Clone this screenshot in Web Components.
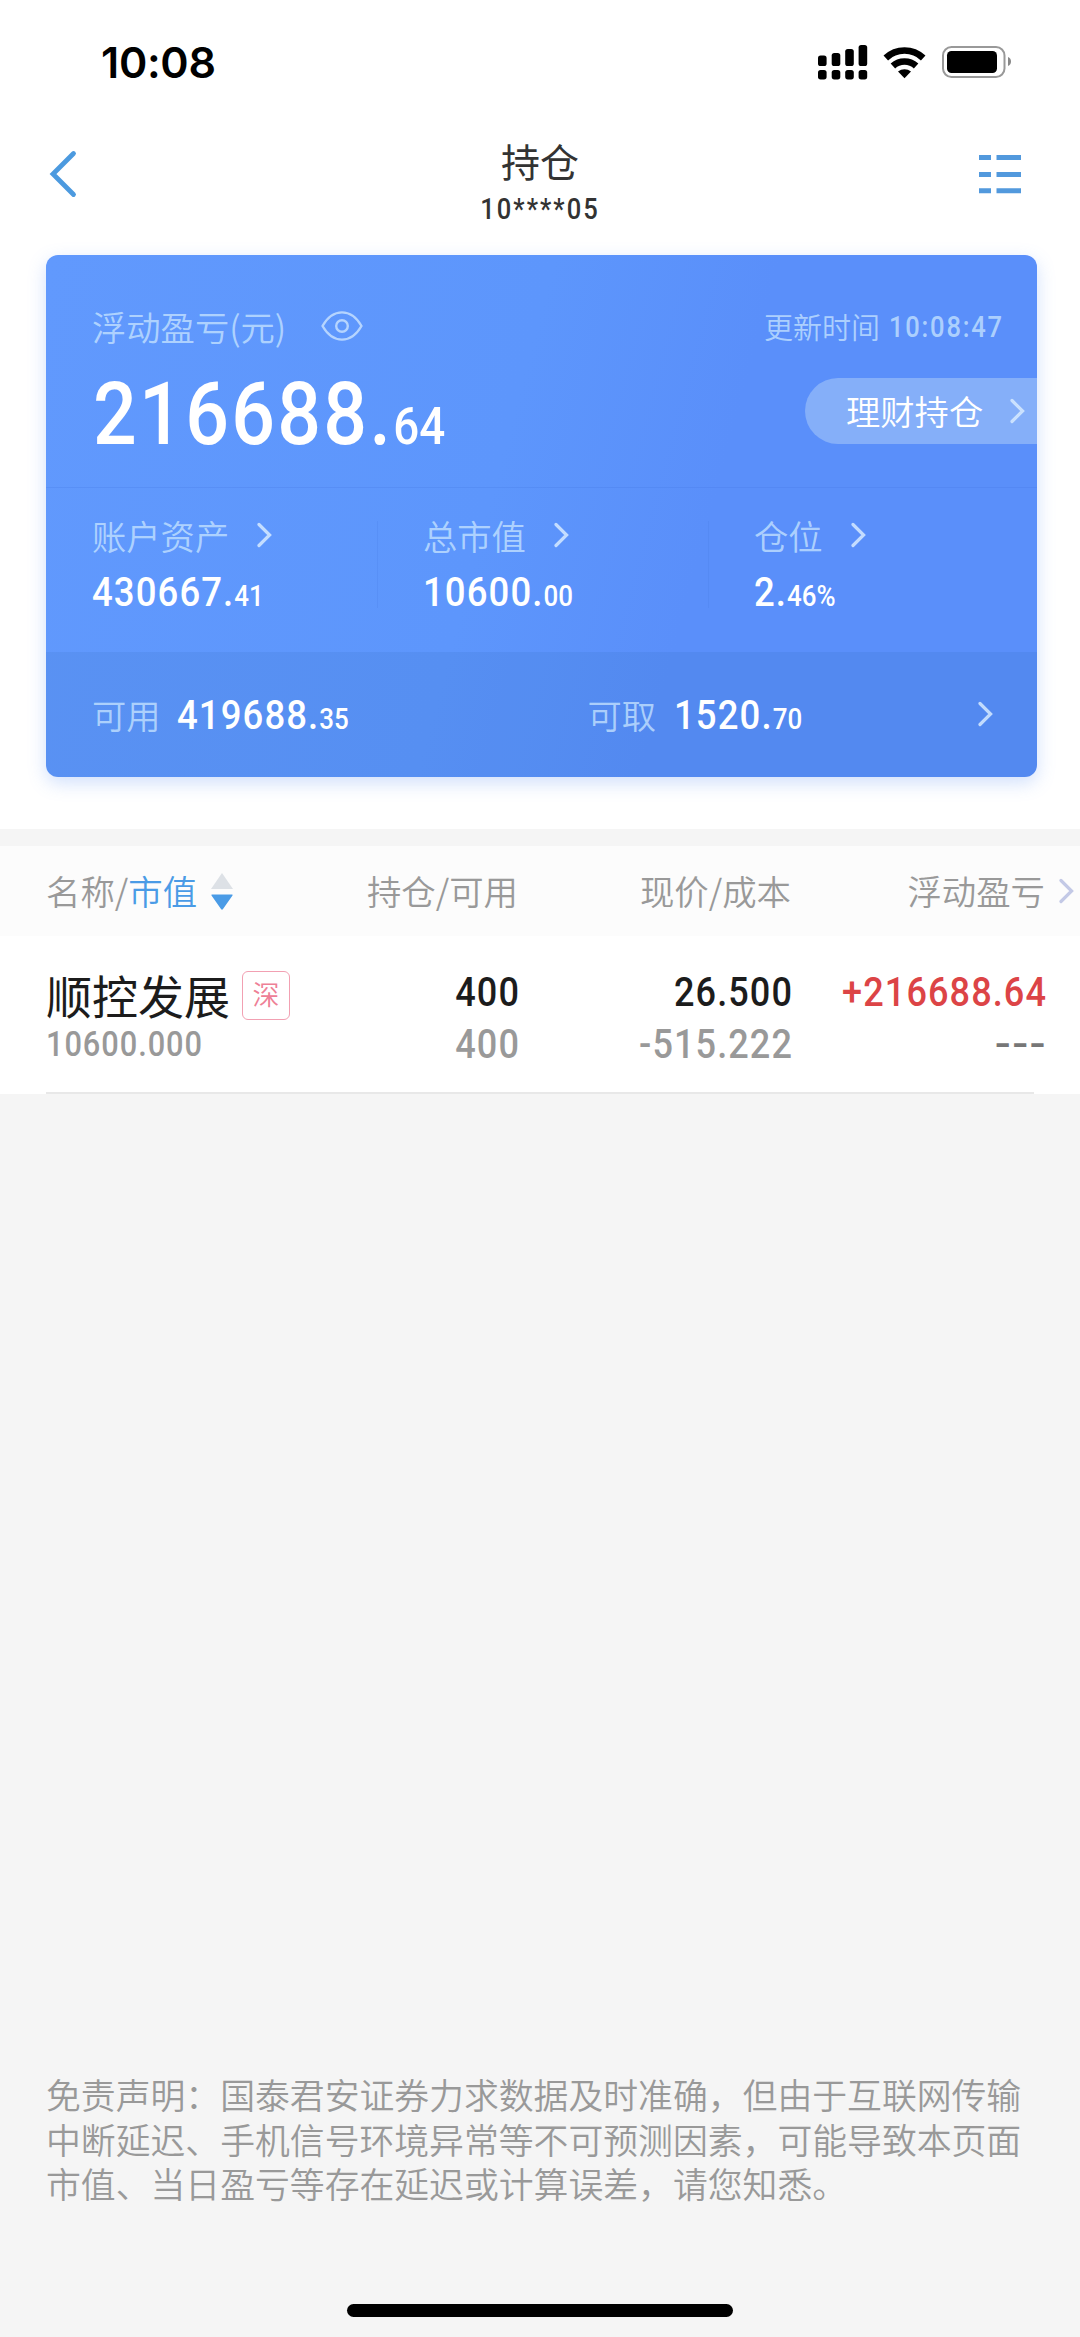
<!DOCTYPE html>
<html lang="zh-CN">
<head>
<meta charset="utf-8">
<title>持仓</title>
<style>
  body {
    margin: 0;
    background: #f5f5f5;
    font-family: "Noto Sans CJK SC", sans-serif;
    font-weight: 350;
  }
</style>
</head>
<body>
<holdings-app></holdings-app>

<script>
// Numero com parte decimal menor: <din-num decimals="64">216688.</din-num>
class DinNum extends HTMLElement {
  constructor() {
    super();
    this.attachShadow({ mode: 'open' });
  }

  connectedCallback() {
    const decimals = this.getAttribute('decimals') || '';
    this.shadowRoot.innerHTML = `
      <style>
        :host {
          display: block;
          font-family: Roboto, sans-serif;
          font-weight: 500;
          letter-spacing: 0.03em;
          white-space: nowrap;
          transform: scaleX(0.88);
          transform-origin: left center;
        }
        :host([end]) {
          transform-origin: right center;
          text-align: right;
          margin-right: -0.05em;
        }
        :host([center]) {
          transform-origin: center;
          text-align: center;
        }
        small {
          font-size: var(--small, 0.71em);
          letter-spacing: 0;
        }
      </style>
      <slot></slot>${decimals ? `<small>${decimals}</small>` : ''}
    `;
  }
}
customElements.define('din-num', DinNum);

class ChevronIcon extends HTMLElement {
  constructor() {
    super();
    this.attachShadow({ mode: 'open' });
    this.shadowRoot.innerHTML = `
      <style>
        :host {
          display: block;
          width: 15px;
          height: 26px;
          color: rgba(214, 234, 255, 0.85);
        }
        svg {
          display: block;
        }
      </style>
      <svg width="15" height="26" viewBox="0 0 15 26" fill="none" stroke="currentColor" stroke-width="3.2" stroke-linecap="round" stroke-linejoin="miter">
        <path d="M2 2.5L12.6 13L2 23.5"/>
      </svg>
    `;
  }
}
customElements.define('chevron-icon', ChevronIcon);

class StatusBar extends HTMLElement {
  constructor() {
    super();
    this.attachShadow({ mode: 'open' });
    this.shadowRoot.innerHTML = `
      <style>
        :host {
          display: flex;
          justify-content: space-between;
          align-items: center;
          height: 123px;
          padding: 0 69px 0 101px;
          box-sizing: border-box;
          color: #000;
        }
        .time {
          font-family: Inter, sans-serif;
          font-weight: 600;
          font-size: 43px;
          letter-spacing: -0.3px;
          line-height: 50px;
        }
        svg {
          display: block;
        }
      </style>
      <div class="time">10:08</div>
      <svg width="194" height="36" viewBox="817 43 194 36">
        <rect x="818" y="54.5" width="8.6" height="10.5" rx="2.6"/>
        <rect x="831.7" y="52" width="8.6" height="13" rx="2.6"/>
        <rect x="845.2" y="48" width="8.6" height="17" rx="2.6"/>
        <rect x="858.6" y="44" width="8.6" height="21" rx="2.6"/>
        <rect x="818" y="69" width="8.6" height="9.4" rx="2.6"/>
        <rect x="831.7" y="69" width="8.6" height="9.4" rx="2.6"/>
        <rect x="845.2" y="69" width="8.6" height="9.4" rx="2.6"/>
        <rect x="858.6" y="69" width="8.6" height="9.4" rx="2.6"/>
        <g fill="none" stroke="#000" stroke-width="6.6">
          <path d="M885.8 57A27.2 27.2 0 0 1 923.2 57"/>
          <path d="M892.9 65A17 17 0 0 1 916.1 65"/>
        </g>
        <path d="M898 70.6A10.5 10.5 0 0 1 911 70.6L904.5 77.2Z"/>
        <rect x="943" y="46" width="61.5" height="30" rx="8.5" fill="none" stroke="#999" stroke-width="2"/>
        <rect x="947" y="50" width="50" height="22" rx="4.5"/>
        <path d="M1008 56C1012 57.5 1012 63.5 1008 65Z" fill="#888"/>
      </svg>
    `;
  }
}
customElements.define('status-bar', StatusBar);

class NavHeader extends HTMLElement {
  constructor() {
    super();
    this.attachShadow({ mode: 'open' });
    this.shadowRoot.innerHTML = `
      <style>
        :host {
          display: grid;
          grid-template-columns: 150px 1fr 150px;
          height: 132px;
          color: #333;
        }
        .back {
          padding: 27px 0 0 49px;
        }
        .list {
          padding: 31px 0 0 49px;
        }
        svg {
          display: block;
        }
        .title {
          text-align: center;
          font-size: 39px;
          line-height: 46px;
          font-weight: 400;
          padding-top: 14px;
        }
        din-num {
          font-size: 29px;
          line-height: 30px;
          letter-spacing: 0.08em;
          margin-top: 11px;
        }
      </style>
      <div class="back">
        <svg width="30" height="48" viewBox="0 0 30 48" fill="none" stroke="#4c9adf" stroke-width="4.8" stroke-linecap="round">
          <path d="M24.5 3.5L4 24L24.5 44.5"/>
        </svg>
      </div>
      <div>
        <div class="title"><slot></slot></div>
        <din-num center>10****05</din-num>
      </div>
      <div class="list">
        <svg width="43" height="40" viewBox="0 0 43 40" fill="#5299dd">
          <path d="M0 1h12v5H0zM17.5 1H42v5H17.5zM0 18h12v5H0zM17.5 18H42v5H17.5zM0 34.2h12v5H0zM17.5 34.2H42v5H17.5z"/>
        </svg>
      </div>
    `;
  }
}
customElements.define('nav-header', NavHeader);

// Cartao azul com o resumo da conta
class AssetCard extends HTMLElement {
  constructor() {
    super();
    this.attachShadow({ mode: 'open' });
    this.colunas = [
      { nome: '账户资产', valor: '430667.', decimal: '41' },
      { nome: '总市值', valor: '10600.', decimal: '00' },
      { nome: '仓位', valor: '2.', decimal: '46%' }
    ];
    this.saldos = [
      { nome: '可用', valor: '419688.', decimal: '35' },
      { nome: '可取', valor: '1520.', decimal: '70' }
    ];
  }

  connectedCallback() {
    this.render();
  }

  render() {
    this.shadowRoot.innerHTML = `
      <style>
        :host {
          display: block;
          width: 991px;
          height: 522px;
          margin-left: 46px;
          border-radius: 12px;
          overflow: hidden;
          color: #fff;
          background: linear-gradient(105deg, #6199fd 0%, #5d96fc 45%, #5a8ffa 65%, #5a8ffa 100%);
          box-shadow: 0 6px 18px rgba(90, 145, 245, 0.28);
        }
        .label {
          font-size: 34.3px;
          line-height: 40px;
          color: rgba(196, 226, 255, 0.8);
          white-space: nowrap;
        }
        .top {
          height: 232px;
          box-sizing: border-box;
          padding-top: 48px;
        }
        .info {
          display: flex;
          align-items: center;
          height: 44px;
          padding: 2px 39px 0 46px;
          box-sizing: border-box;
        }
        .eye {
          margin-left: 35px;
        }
        svg {
          display: block;
        }
        .update {
          display: flex;
          align-items: center;
          margin-left: auto;
          font-size: 29px;
          color: rgba(196, 226, 255, 0.8);
        }
        .update din-num {
          width: 109px;
          margin: 2px 0 0 9px;
          letter-spacing: 0.07em;
        }
        .total {
          display: flex;
          justify-content: space-between;
          align-items: flex-start;
        }
        .total din-num {
          font-size: 87.5px;
          line-height: 100px;
          margin: 17px 0 0 47px;
          --small: 52px;
        }
        .pill {
          display: flex;
          align-items: center;
          width: 232px;
          height: 66px;
          margin-top: 31px;
          padding: 0 12px 0 41px;
          box-sizing: border-box;
          border-radius: 33px 0 0 33px;
          background: #85aff9;
          font-size: 34.3px;
          line-height: 40px;
        }
        .pill span {
          margin-top: -2px;
        }
        .pill chevron-icon {
          margin-left: auto;
        }
        .cols {
          display: grid;
          grid-template-columns: 331px 331px 1fr;
          height: 165px;
          border-top: 1px solid rgba(60, 110, 220, 0.2);
          box-sizing: border-box;
        }
        .col {
          position: relative;
          padding: 27px 0 0 46px;
        }
        .col + .col::before {
          content: "";
          position: absolute;
          left: 0;
          top: 33px;
          width: 1px;
          height: 87px;
          background: rgba(60, 110, 220, 0.16);
        }
        .name {
          display: flex;
          align-items: center;
          gap: 28px;
        }
        .col din-num {
          font-size: 41.5px;
          line-height: 40px;
          margin-top: 17px;
        }
        .bottom {
          position: relative;
          display: grid;
          grid-template-columns: 1fr 1fr;
          align-items: center;
          height: 125px;
          background: rgba(30, 90, 160, 0.1);
        }
        .saldo {
          display: flex;
          align-items: center;
          padding-left: 46px;
        }
        .saldo .label {
          margin-top: -2px;
        }
        .saldo din-num {
          font-size: 41.5px;
          line-height: 40px;
          margin: 4px 0 0 16px;
        }
        .saldo + .saldo din-num {
          margin-left: 18px;
        }
        .bottom > chevron-icon {
          position: absolute;
          right: 44px;
          top: 49px;
        }
      </style>
      <div class="top">
        <div class="info">
          <div class="label">浮动盈亏(元)</div>
          <svg class="eye" width="42" height="30" viewBox="0 0 42 30" fill="none" stroke="#b5d4fe" stroke-width="2.4">
            <path d="M1.5 15C7 5.500 14 1.400 21 1.400S35 5.500 40.500 15C35 24.500 28 28.600 21 28.600S7 24.500 1.500 15Z" stroke-linejoin="round"/>
            <circle cx="21" cy="15" r="5.800"/>
          </svg>
          <div class="update"><span>更新时间</span><din-num>10:08:47</din-num></div>
        </div>
        <div class="total">
          <din-num decimals="64">216688.</din-num>
          <div class="pill"><span>理财持仓</span><chevron-icon></chevron-icon></div>
        </div>
      </div>
      <div class="cols">
        ${this.colunas.map(c => `
          <div class="col">
            <div class="name"><span class="label">${c.nome}</span><chevron-icon></chevron-icon></div>
            <din-num decimals="${c.decimal}">${c.valor}</din-num>
          </div>
        `).join('')}
      </div>
      <div class="bottom">
        ${this.saldos.map(s => `
          <div class="saldo"><span class="label">${s.nome}</span><din-num decimals="${s.decimal}">${s.valor}</din-num></div>
        `).join('')}
        <chevron-icon></chevron-icon>
      </div>
    `;
  }
}
customElements.define('asset-card', AssetCard);

class HoldingsTable extends HTMLElement {
  constructor() {
    super();
    this.attachShadow({ mode: 'open' });
    this.posicoes = [
      {
        nome: '顺控发展',
        mercado: '深',
        valor: '10600.000',
        total: '400',
        disponivel: '400',
        preco: '26.500',
        custo: '-515.222',
        lucro: '+216688.64',
        taxa: '---'
      }
    ];
  }

  connectedCallback() {
    this.render();
  }

  render() {
    this.shadowRoot.innerHTML = `
      <style>
        :host {
          display: block;
          background: #fff;
        }
        .head, .row {
          display: grid;
          grid-template-columns: 250px 222px 273px 254px 1fr;
          padding-left: 46px;
        }
        .head {
          height: 90px;
          align-items: center;
          background: #fcfcfc;
          font-size: 34.4px;
          line-height: 40px;
          color: #999;
        }
        .head > div {
          text-align: right;
          margin-top: -2px;
          white-space: nowrap;
        }
        .head > .sort {
          display: flex;
          align-items: center;
        }
        b {
          font-weight: inherit;
          color: #4a9be6;
        }
        .sort svg {
          margin: 4px 0 0 14px;
        }
        .head chevron-icon {
          color: #c3c9e6;
          margin-left: 14px;
        }
        .row {
          position: relative;
          height: 158px;
          box-sizing: border-box;
          padding-top: 33px;
        }
        .row::after {
          content: "";
          position: absolute;
          left: 46px;
          right: 46px;
          bottom: 0;
          height: 2px;
          background: #e8e8e8;
        }
        .stock {
          display: flex;
          align-items: flex-start;
          font-size: 46px;
          line-height: 50px;
          font-weight: 400;
          color: #1c1c1c;
        }
        .badge {
          flex: none;
          width: 48px;
          height: 49px;
          margin: 2px 0 0 12px;
          box-sizing: border-box;
          border: 1.5px solid #f2a0b2;
          border-radius: 6px;
          font-size: 27px;
          line-height: 43px;
          text-align: center;
          font-weight: 350;
          color: #ee8096;
        }
        .sub {
          font-size: 35px;
          line-height: 30px;
          margin-top: 10px;
          color: #999;
        }
        .num {
          font-size: 41px;
          line-height: 40px;
          padding-top: 3px;
          color: #1c1c1c;
        }
        .num din-num + din-num {
          margin-top: 12px;
          color: #999;
        }
        .num.up {
          color: #dc4446;
        }
        .num.up din-num + din-num {
          transform: scaleX(1.15);
          color: #777;
        }
      </style>
      <div class="head">
        <div class="sort">名称/<b>市值</b>
          <svg width="22" height="38" viewBox="0 0 22 38">
            <path d="M11 0L22 16H0Z" fill="#dde1e6"/>
            <path d="M1 21.500H21Q22 21.500 21.500 22.500L12 36Q11 37.500 10 36L.5 22.500Q0 21.500 1 21.500Z" fill="#4a9be6"/>
          </svg>
        </div>
        <div>持仓/可用</div>
        <div>现价/成本</div>
        <div>浮动盈亏</div>
        <chevron-icon></chevron-icon>
      </div>
      ${this.posicoes.map(p => `
        <div class="row">
          <div>
            <div class="stock">${p.nome}<span class="badge">${p.mercado}</span></div>
            <din-num class="sub">${p.valor}</din-num>
          </div>
          <div class="num"><din-num end>${p.total}</din-num><din-num end>${p.disponivel}</din-num></div>
          <div class="num"><din-num end>${p.preco}</din-num><din-num end>${p.custo}</din-num></div>
          <div class="num up"><din-num end>${p.lucro}</din-num><din-num end>${p.taxa}</din-num></div>
        </div>
      `).join('')}
    `;
  }
}
customElements.define('holdings-table', HoldingsTable);

class HoldingsApp extends HTMLElement {
  constructor() {
    super();
    this.attachShadow({ mode: 'open' });
    this.shadowRoot.innerHTML = `
      <style>
        :host {
          display: flex;
          flex-direction: column;
          width: 1080px;
          height: 2337px;
          background: #f5f5f5;
        }
        .panel {
          height: 829px;
          background: #fff;
        }
        holdings-table {
          margin-top: 17px;
        }
        p {
          margin: auto 46px 98px;
          font-size: 34.85px;
          line-height: 44.6px;
          color: #999;
        }
        .home {
          flex: none;
          width: 386px;
          height: 13px;
          margin: 0 auto 20px;
          border-radius: 7px;
          background: #000;
        }
      </style>
      <div class="panel">
        <status-bar></status-bar>
        <nav-header>持仓</nav-header>
        <asset-card></asset-card>
      </div>
      <holdings-table></holdings-table>
      <p>免责声明：国泰君安证券力求数据及时准确，但由于互联网传输中断延迟、手机信号环境异常等不可预测因素，可能导致本页面市值、当日盈亏等存在延迟或计算误差，请您知悉。</p>
      <div class="home"></div>
    `;
  }
}
customElements.define('holdings-app', HoldingsApp);
</script>
</body>
</html>
